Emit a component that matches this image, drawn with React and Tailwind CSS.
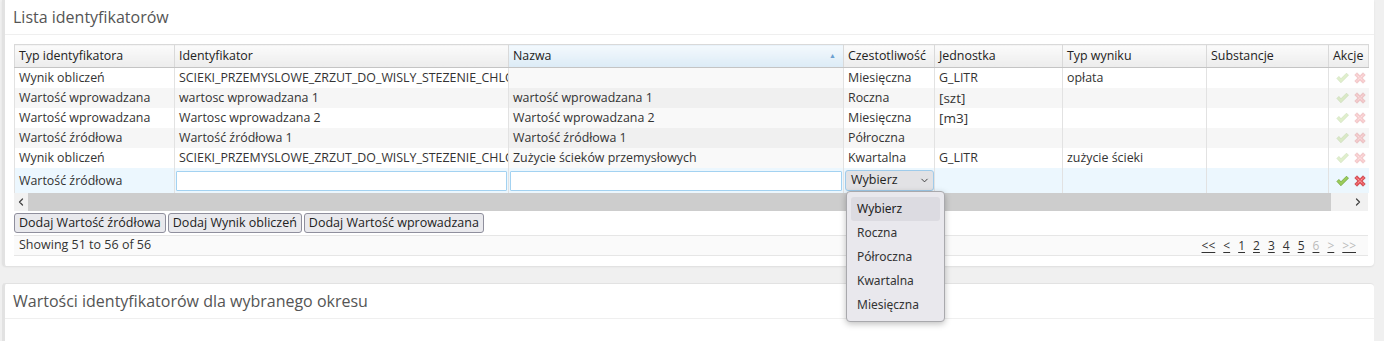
import React from "react";
import { ChevronDown, ChevronLeft, ChevronRight } from "lucide-react";

const rows = [
  ["Wynik obliczeń", "SCIEKI_PRZEMYSLOWE_ZRZUT_DO_WISLY_STEZENIE_CHLORKOW", "", "Miesięczna", "G_LITR", "opłata", ""],
  ["Wartość wprowadzana", "wartosc wprowadzana 1", "wartość wprowadzana 1", "Roczna", "[szt]", "", ""],
  ["Wartość wprowadzana", "Wartosc wprowadzana 2", "Wartość wprowadzana 2", "Miesięczna", "[m3]", "", ""],
  ["Wartość źródłowa", "Wartość źródłowa 1", "Wartość źródłowa 1", "Półroczna", "", "", ""],
  ["Wynik obliczeń", "SCIEKI_PRZEMYSLOWE_ZRZUT_DO_WISLY_STEZENIE_CHLORKOW", "Zużycie ścieków przemysłowych", "Kwartalna", "G_LITR", "zużycie ścieki", ""],
];

function Tick() {
  return (
    <svg width="13" height="12" viewBox="0 0 16 15">
      <polygon points="1,8 3.5,5.5 6,8.5 13,1.5 15.5,4 6,13.5" fill="#9ccc5a" stroke="#5f9a26" strokeWidth="0.8" strokeLinejoin="round" />
    </svg>
  );
}

function Cross() {
  return (
    <svg width="12" height="12" viewBox="0 0 16 16">
      <polygon
        points="1,4 4,1 8,5 12,1 15,4 11,8 15,12 12,15 8,11 4,15 1,12 5,8"
        fill="#e9545a"
        stroke="#b82a30"
        strokeWidth="0.8"
        strokeLinejoin="round"
      />
      <path d="M3.5 4 L12.5 12 M12.5 4 L3.5 12" stroke="#fff" strokeWidth="0.9" strokeDasharray="1.4 1.4" />
    </svg>
  );
}

function Actions({ faded }) {
  return (
    <div className={`flex items-center gap-[5px] pl-[7px] ${faded ? "opacity-30" : ""}`}>
      <Tick />
      <Cross />
    </div>
  );
}

export default function App() {
  const td = "h-[20px] py-0 px-[4px] border-r border-[#e2e2e2] whitespace-nowrap overflow-hidden leading-[20px]";
  return (
    <div className="min-h-[341px] bg-[#f0f0f0] pl-[2px] pr-[10px] font-['Open_Sans',sans-serif] text-[#333]">
      <div className="bg-white rounded-b-[4px] border-l-[3px] border-[#e2e2e2] shadow-[0_1px_2px_rgba(0,0,0,0.08)]">
        <div className="h-[35px] pl-[8px] flex items-center text-[16px] text-[#555] border-b border-[#efefef]">
          Lista identyfikatorów
        </div>
        <div className="pl-[9px] pr-[3px] pt-[9px] pb-[10px]">
          <div className="w-[1354px]">
            <table className="table-fixed border-collapse w-[1354px] text-[12.4px]">
              <colgroup>
                <col className="w-[160px]" />
                <col className="w-[334px]" />
                <col className="w-[335px]" />
                <col className="w-[91px]" />
                <col className="w-[128px]" />
                <col className="w-[144px]" />
                <col className="w-[122px]" />
                <col className="w-[40px]" />
              </colgroup>
              <thead>
                <tr className="h-[23px] text-[#222]">
                  {["Typ identyfikatora", "Identyfikator", "Nazwa", "Czestotliwość", "Jednostka", "Typ wyniku", "Substancje", "Akcje"].map((h) =>
                    h === "Nazwa" ? (
                      <th key={h} className="text-left font-medium px-[4px] border border-[#d9d9d9] border-b-[#c4c4c4] bg-gradient-to-b from-[#f3f9fd] to-[#dcebf6]">
                        <div className="flex items-center justify-between">
                          <span>Nazwa</span>
                          <span className="text-[7px] text-[#6b9fd0] mr-[3px]">▲</span>
                        </div>
                      </th>
                    ) : (
                      <th key={h} className="text-left font-medium px-[4px] border border-[#d9d9d9] border-b-[#c4c4c4] bg-gradient-to-b from-[#fbfbfb] to-[#ececec] whitespace-nowrap overflow-hidden">
                        {h}
                      </th>
                    )
                  )}
                </tr>
              </thead>
              <tbody>
                {rows.map((r, i) => {
                  const even = i % 2 === 1;
                  return (
                    <tr key={i} className={`${even ? "bg-[#f6f6f6]" : "bg-white"}`}>
                      <td className={`${td} border-l border-l-[#e2e2e2]`}>{r[0]}</td>
                      <td className={td}>{r[1]}</td>
                      <td className={`${td} ${even ? "bg-[#f0f0f0]" : "bg-[#f9f9f9]"}`}>{r[2]}</td>
                      <td className={td}>{r[3]}</td>
                      <td className={`${td} ${r[4].startsWith("[") ? "text-[13.5px]" : ""}`}>{r[4]}</td>
                      <td className={td}>{r[5]}</td>
                      <td className={td}>{r[6]}</td>
                      <td className="h-[20px] p-0">
                        <Actions faded />
                      </td>
                    </tr>
                  );
                })}
                <tr className="bg-[#ecf7fe]">
                  <td className="h-[25px] pt-[2px] pb-0 px-[4px] border-r border-[#e2e2e2] border-l border-l-[#e2e2e2] whitespace-nowrap">Wartość źródłowa</td>
                  <td className="px-[1px] py-0 border-r border-[#e2e2e2]">
                    <div className="h-[20px] bg-white border border-[#a3d2f1] rounded-[1px]" />
                  </td>
                  <td className="px-[1px] py-0 border-r border-[#e2e2e2]">
                    <div className="h-[20px] bg-white border border-[#a3d2f1] rounded-[1px]" />
                  </td>
                  <td className="pl-[1px] pr-0 py-0 border-r border-[#e2e2e2] relative overflow-visible">
                    <div className="h-[21px] bg-[#e2e2e5] border border-[#9fcbea] rounded-[3px] flex items-center justify-between pl-[5px] pr-[3px] text-[12.5px] text-[#222]">
                      <span>Wybierz</span>
                      <ChevronDown size={11} strokeWidth={2} className="text-[#333]" />
                    </div>
                    <div className="absolute left-[2px] top-[23px] z-10 w-[99px] bg-[#e9e8ed] border border-[#a9a9ad] rounded-[4px] shadow-[0_2px_6px_rgba(0,0,0,0.25)] px-[4px] pt-[5px] pb-[4px] font-['Noto_Sans',sans-serif] text-[12px] text-[#333]">
                      {["Wybierz", "Roczna", "Półroczna", "Kwartalna", "Miesięczna"].map((o, k) => (
                        <div key={o} className={`h-[24px] flex items-center pl-[6px] rounded-[3px] ${k === 0 ? "bg-[#dcdbe1] text-[#222]" : ""}`}>
                          {o}
                        </div>
                      ))}
                    </div>
                  </td>
                  <td className="border-r border-[#e2e2e2]" />
                  <td className="border-r border-[#e2e2e2]" />
                  <td className="border-r border-[#e2e2e2]" />
                  <td className="p-0">
                    <Actions />
                  </td>
                </tr>
              </tbody>
            </table>
            <div className="h-[18px] flex items-stretch bg-[#f1f1f1]">
              <div className="w-[14px] flex items-center justify-center">
                <ChevronLeft size={12} strokeWidth={2.5} className="text-[#444]" />
              </div>
              <div className="w-[1303px] bg-[#cdcdcd]" />
              <div className="flex-1 flex items-center justify-end pr-[4px]">
                <ChevronRight size={12} strokeWidth={2.5} className="text-[#444]" />
              </div>
            </div>
          </div>
          <div className="flex gap-[2px] py-[2px] text-[12.5px]">
            {["Dodaj Wartość źródłowa", "Dodaj Wynik obliczeń", "Dodaj Wartość wprowadzana"].map((b) => (
              <button key={b} className="h-[20px] px-[4px] bg-[#e9e9ed] border border-[#8f8f9d] rounded-[3px] text-[#222] leading-none">
                {b}
              </button>
            ))}
          </div>
          <div className="h-[21px] w-[1354px] flex items-center justify-between bg-[#fafafa] border-y border-[#e6e6e6] pl-[5px] pr-[12px] text-[12.5px]">
            <span>Showing 51 to 56 of 56</span>
            <div className="flex items-center gap-[8px] text-[12px] underline underline-offset-2">
              <span>&lt;&lt;</span>
              <span>&lt;</span>
              <span>1</span>
              <span>2</span>
              <span>3</span>
              <span>4</span>
              <span>5</span>
              <span className="text-[#bbb]">6</span>
              <span className="text-[#bbb]">&gt;</span>
              <span className="text-[#bbb]">&gt;&gt;</span>
            </div>
          </div>
        </div>
      </div>
      <div className="h-[17px]" />
      <div className="bg-white rounded-t-[4px] border-l-[3px] border-t border-[#e2e2e2] h-[60px]">
        <div className="h-[35px] pl-[8px] flex items-center text-[16px] text-[#555] border-b border-[#efefef]">
          Wartości identyfikatorów dla wybranego okresu
        </div>
      </div>
    </div>
  );
}
